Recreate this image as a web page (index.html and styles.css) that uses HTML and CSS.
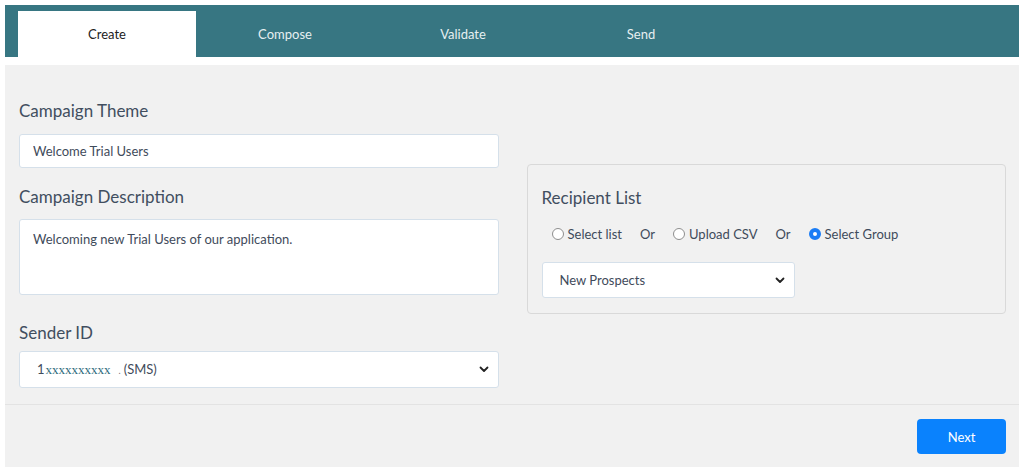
FILE: index.html
```html
<!DOCTYPE html>
<html lang="en">
<head>
<meta charset="utf-8">
<title>Create Campaign</title>
<link rel="stylesheet" href="styles.css">
</head>
<body>
<div class="page">
  <nav class="tabs">
    <div class="tab active">Create</div>
    <div class="tab">Compose</div>
    <div class="tab">Validate</div>
    <div class="tab">Send</div>
  </nav>
  <main class="panel">
    <div class="form-body">
      <div class="col-left">
        <label class="label label-theme">Campaign Theme</label>
        <input class="field field-input" type="text" value="Welcome Trial Users">
        <label class="label label-desc">Campaign Description</label>
        <textarea class="field field-area">Welcoming new Trial Users of our application.</textarea>
        <label class="label label-sender">Sender ID</label>
        <div class="field select select-sender">
          <span class="select-value"><span class="num">1</span><span class="mask">xxxxxxxxxx</span><span class="dot">.</span><span>(SMS)</span></span>
          <svg class="chev" width="10" height="7" viewBox="0 0 10 7"><path d="M1.5 1.5 L5 5 L8.5 1.5" fill="none" stroke="#222" stroke-width="1.8" stroke-linecap="round" stroke-linejoin="round"/></svg>
        </div>
      </div>
      <div class="col-right">
        <section class="card">
          <h2 class="label card-title">Recipient List</h2>
          <div class="radios">
            <label class="radio"><span class="dot-ui"></span>Select list</label>
            <span class="or">Or</span>
            <label class="radio"><span class="dot-ui"></span>Upload CSV</label>
            <span class="or">Or</span>
            <label class="radio"><span class="dot-ui checked"></span>Select Group</label>
          </div>
          <div class="field select select-group">
            <span class="select-value">New Prospects</span>
            <svg class="chev" width="10" height="7" viewBox="0 0 10 7"><path d="M1.5 1.5 L5 5 L8.5 1.5" fill="none" stroke="#222" stroke-width="1.8" stroke-linecap="round" stroke-linejoin="round"/></svg>
          </div>
        </section>
      </div>
    </div>
    <footer class="footer">
      <button class="btn-next">Next</button>
    </footer>
  </main>
</div>
</body>
</html>
```
FILE: styles.css
```css
* { box-sizing: border-box; }
html, body { margin: 0; padding: 0; background: #ffffff; }
body { font-family: "Lato", "Open Sans", sans-serif; color: #3f4b5b; }

.page { padding: 5px 5px 0 5px; }

.tabs {
  display: flex;
  background: #377682;
  height: 52px;
  padding: 6px 0 0 13px;
}
.tab {
  width: 178px;
  height: 46px;
  display: flex;
  align-items: center;
  justify-content: center;
  font-size: 13px;
  color: #e6eff1;
}
.tab.active { background: #ffffff; color: #222; }

.panel {
  margin-top: 8px;
  background: #f1f1f1;
}
.form-body {
  display: grid;
  grid-template-columns: 1fr 1fr;
  column-gap: 28px;
  padding: 33px 13px 16px 14px;
  border-bottom: 1px solid #e3e3e3;
}
.col-left { display: flex; flex-direction: column; }

.label {
  display: block;
  font-size: 17px;
  line-height: 24px;
  font-weight: 400;
  color: #414e5f;
  margin: 0;
}
.label-theme { margin-top: 1px; margin-bottom: 11px; }
.label-desc { margin-top: 17px; margin-bottom: 10px; }
.label-sender { margin-top: 26px; margin-bottom: 6px; }

.field {
  display: block;
  width: 100%;
  background: #ffffff;
  border: 1px solid #d5e0ea;
  border-radius: 3px;
  font-family: "Lato", "Open Sans", sans-serif;
  font-size: 13px;
  color: #3f4b5b;
  outline: none;
}
.field-input { height: 34px; padding: 0 13px; }
.field-area {
  height: 76px;
  padding: 10px 13px 8px 13px;
  line-height: 19.5px;
  resize: none;
}
.select {
  display: flex;
  align-items: center;
  justify-content: space-between;
  padding: 0 9px 0 17px;
}
.select-sender { height: 37px; }
.select-group { width: 253px; height: 36px; font-size: 13px; }
.select-value { display: flex; align-items: baseline; }
.num { margin-right: 1px; }
.mask {
  font-family: "Liberation Serif", "DejaVu Serif", serif;
  font-size: 13px;
  color: #2d6b7c;
  letter-spacing: 0;
}
.dot { margin: 0 3px 0 8px; font-size: 9px; color: #777; }
.chev { display: block; }

.col-right { padding-top: 66px; }
.card {
  border: 1px solid #d9d9d9;
  border-radius: 4px;
  padding: 21px 14px 15px 14px;
  height: 150px;
}
.card-title { margin-bottom: 14px; }
.radios {
  display: flex;
  align-items: center;
  height: 20px;
  padding-left: 10px;
  font-size: 13px;
  color: #3f4b5b;
  margin-bottom: 18px;
}
.radio { display: flex; align-items: center; }
.dot-ui {
  width: 12px;
  height: 12px;
  border-radius: 50%;
  border: 1px solid #8e8e8e;
  background: #ffffff;
  margin-right: 4px;
}
.dot-ui.checked {
  border: 4px solid #1a7cf5;
  background: #ffffff;
}
.or { margin: 0 18px; }

.footer {
  display: flex;
  justify-content: flex-end;
  padding: 14px 13px 13px 0;
}
.btn-next {
  width: 89px;
  height: 35px;
  border: none;
  border-radius: 4px;
  background: #0a82fd;
  color: #ffffff;
  font-family: "Lato", "Open Sans", sans-serif;
  font-size: 13px;
}
```
